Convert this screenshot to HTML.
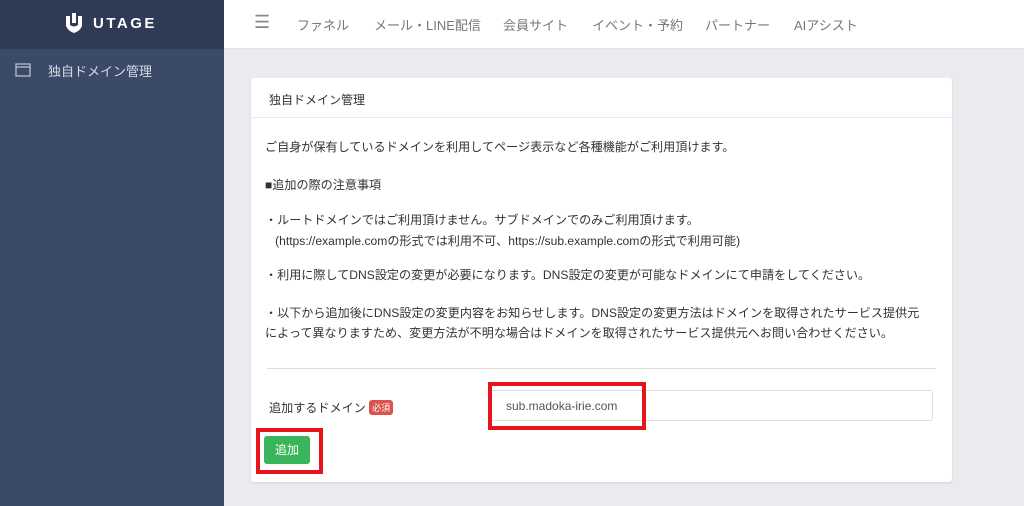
<!DOCTYPE html>
<html><head><meta charset="utf-8"><style>
*{margin:0;padding:0;box-sizing:border-box}
body{width:1024px;height:506px;overflow:hidden;background:#e9ebee;font-family:"Liberation Sans","Noto Sans CJK JP",sans-serif;position:relative;color:#333}
.sb{position:absolute;left:0;top:0;width:224px;height:506px;background:#3b4a68}
.sbh{position:absolute;left:0;top:0;width:224px;height:49px;background:#2f3b55}
.logo{position:absolute;left:66px;top:15px;color:#fff;font-weight:bold;font-size:15px;letter-spacing:2.5px}
.side{position:absolute;left:14px;top:62px;color:#d5dae3;font-size:13px}
.top{position:absolute;left:224px;top:0;width:800px;height:49px;background:#fff;border-bottom:1px solid #e3e5e8}
.nav{position:absolute;top:15px;font-size:13px;color:#777}
.card{position:absolute;left:251px;top:78px;width:701px;height:404px;background:#fff;border-radius:3px;box-shadow:0 1px 2px rgba(0,0,0,.1)}
.ch{height:40px;border-bottom:1px solid #e9ebee;padding:13px 18px;font-size:12px}
.t{position:absolute;left:14px;font-size:12.1px;color:#333;white-space:nowrap}
.hr{position:absolute;left:16px;right:16px;top:290px;border-top:1px solid #ddd}
.inp{position:absolute;left:238px;top:312px;width:444px;height:31px;border:1px solid #dcdfe3;border-radius:3px;font-size:12px;color:#555;padding:8px 16px}
.btn{position:absolute;left:13px;top:358px;width:46px;height:28px;background:#3ab55b;border-radius:3px;color:#fff;font-size:12px;text-align:center;line-height:28px}
.red{position:absolute;border:4px solid #e8141b}
.req{display:inline-block;background:#d9534f;color:#fff;font-size:9px;padding:1px 3px;border-radius:3px;vertical-align:1px}
</style></head><body>
<div class="sb"><div class="sbh"></div>
<svg style="position:absolute;left:66px;top:13px" width="16" height="20" viewBox="0 0 16 20"><path d="M0 3 L4 3 L4 12 Q8 15 12 12 L12 3 L16 3 L16 13 Q14 18 8 20 Q2 18 0 13Z M6 0 H10 V10 H6Z" fill="#fff"/></svg>
<div class="logo" style="left:93px">UTAGE</div>
<svg style="position:absolute;left:15px;top:63px" width="16" height="14"><rect x="1" y="1" width="14" height="12" fill="none" stroke="#b8c0cf" stroke-width="1.3"/><line x1="1" y1="4" x2="15" y2="4" stroke="#b8c0cf" stroke-width="1.3"/></svg>
<div class="side" style="left:48px;top:61px">独自ドメイン管理</div></div>
<div class="top">
<div class="nav" style="left:30px;font-size:18px;top:12px;color:#888">☰</div>
<div class="nav" style="left:73px">ファネル</div>
<div class="nav" style="left:150px">メール・LINE配信</div>
<div class="nav" style="left:279px">会員サイト</div>
<div class="nav" style="left:368px">イベント・予約</div>
<div class="nav" style="left:481px">パートナー</div>
<div class="nav" style="left:570px">AIアシスト</div>
</div>
<div class="card">
<div class="ch">独自ドメイン管理</div>
<div class="t" style="top:60px">ご自身が保有しているドメインを利用してページ表示など各種機能がご利用頂けます。</div>
<div class="t" style="top:98px">■追加の際の注意事項</div>
<div class="t" style="top:133px">・ルートドメインではご利用頂けません。サブドメインでのみご利用頂けます。</div>
<div class="t" style="top:154px">&nbsp;&nbsp;&nbsp;(https://example.comの形式では利用不可、https://sub.example.comの形式で利用可能)</div>
<div class="t" style="top:188px">・利用に際してDNS設定の変更が必要になります。DNS設定の変更が可能なドメインにて申請をしてください。</div>
<div class="t" style="top:226px">・以下から追加後にDNS設定の変更内容をお知らせします。DNS設定の変更方法はドメインを取得されたサービス提供元</div>
<div class="t" style="top:246px">によって異なりますため、変更方法が不明な場合はドメインを取得されたサービス提供元へお問い合わせください。</div>
<div class="hr"></div>
<div class="t" style="top:321px;left:18px">追加するドメイン <span class="req">必須</span></div>
<div class="inp">sub.madoka-irie.com</div>
<div class="btn">追加</div>
</div>
<div class="red" style="left:488px;top:382px;width:158px;height:48px"></div>
<div class="red" style="left:256px;top:428px;width:67px;height:46px"></div>
</body></html>
